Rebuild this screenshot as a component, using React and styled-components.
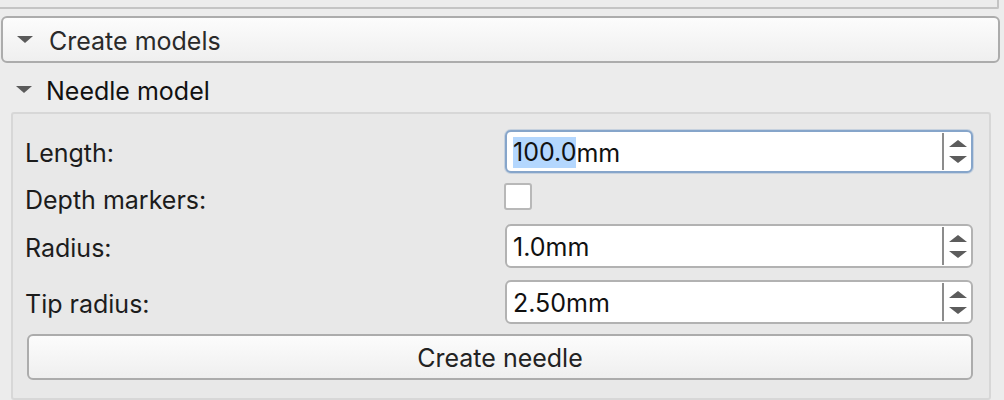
import React from 'react'
import styled, {createGlobalStyle} from 'styled-components'

const GlobalStyle = createGlobalStyle`
  html, body {
    margin: 0;
    padding: 0;
    background: #ececec;
  }
  body {
    font-family: "Inter", "Liberation Sans", sans-serif;
    color: #1c1c1c;
  }
`

const Page = styled.div`
  width: 1004px;
  height: 400px;
  overflow: hidden;
  display: flex;
  flex-direction: column;
`

const TopPanel = styled.div`
  box-sizing: border-box;
  width: 999px;
  height: 9px;
  border-right: 2px solid #c4c4c4;
  border-bottom: 2px solid #c4c4c4;
  border-bottom-right-radius: 2px;
`

const Triangle = styled.span`
  display: inline-block;
  width: 0;
  height: 0;
  border-left: 8px solid transparent;
  border-right: 8px solid transparent;
  border-top: 7px solid #5a5a5a;
`

const Caption = styled.span`
  padding-top: 3px;
`

const CollapseButton = styled.div`
  box-sizing: border-box;
  margin: 7px 0 0 1px;
  width: 999px;
  height: 47px;
  border: 2px solid #acacac;
  border-radius: 6px;
  background: linear-gradient(#fcfcfc, #efefef);
  display: flex;
  align-items: center;
  padding-left: 14px;
  gap: 16px;
  font-size: 25px;
  color: #2a2a2a;
`

const SectionHeader = styled.div`
  height: 44px;
  margin-top: 5px;
  display: flex;
  align-items: center;
  padding-left: 16px;
  gap: 14px;
  font-size: 25px;
  color: #111;
`

const GroupBox = styled.div`
  box-sizing: border-box;
  margin: 1px 0 0 11px;
  width: 980px;
  height: 290px;
  border: 2px solid #d7d7d7;
  border-radius: 3px;
  background: #e8e8e8;
  padding: 16px 16px 0 12px;
  display: flex;
  flex-direction: column;
`

const FormRow = styled.div`
  display: flex;
  align-items: ${p => p.$align || 'center'};
  height: ${p => p.$h}px;
  margin-bottom: ${p => p.$gap}px;
`

const Label = styled.div`
  flex: 1;
  font-size: 25px;
  color: #1c1c1c;
  align-self: center;
  padding-top: ${p => p.$offset || 0}px;
`

const SpinBox = styled.div`
  box-sizing: border-box;
  width: 468px;
  height: 100%;
  background: #fff;
  border: 2px solid ${p => (p.$focused ? '#86a5ca' : '#b2b2b2')};
  border-radius: 6px;
  display: flex;
  align-items: stretch;
  box-shadow: ${p => (p.$focused ? '0 0 0 1px rgba(134,165,202,0.35)' : 'none')};
`

const SpinText = styled.div`
  flex: 1;
  display: flex;
  align-items: center;
  padding: 2px 0 0 6px;
  font-size: 25px;
  color: #111;
`

const Selected = styled.span`
  background: #b4d7fe;
  line-height: 31px;
`

const SpinButtons = styled.div`
  width: 27px;
  border-left: 2px solid #8c8c8c;
  margin: 1px 0;
  display: flex;
  flex-direction: column;
  align-items: center;
  justify-content: center;
  gap: 9px;
`

const Arrow = styled.span`
  display: block;
  width: 0;
  height: 0;
  border-left: 9px solid transparent;
  border-right: 9px solid transparent;
  ${p => (p.$up ? 'border-bottom: 7px solid #5c5c5c;' : 'border-top: 7px solid #5c5c5c;')}
`

const CheckBox = styled.div`
  box-sizing: border-box;
  width: 28px;
  height: 27px;
  margin-right: 441px;
  background: #fff;
  border: 2px solid #b8b8b8;
  border-radius: 3px;
`

const PushButton = styled.div`
  box-sizing: border-box;
  width: 946px;
  height: 46px;
  margin-left: 2px;
  padding-top: 2px;
  border: 2px solid #acacac;
  border-radius: 6px;
  background: linear-gradient(#fcfcfc, #efefef);
  display: flex;
  align-items: center;
  justify-content: center;
  font-size: 25px;
  color: #222;
`

const Spin = ({value, selected, focused}) => (
  <SpinBox $focused={focused}>
    <SpinText>
      {selected ? <Selected>{selected}</Selected> : null}
      {value}
    </SpinText>
    <SpinButtons>
      <Arrow $up />
      <Arrow />
    </SpinButtons>
  </SpinBox>
)

export default function App() {
  return (
    <Page>
      <GlobalStyle />
      <TopPanel />
      <CollapseButton>
        <Triangle />
        <Caption>Create models</Caption>
      </CollapseButton>
      <SectionHeader>
        <Triangle />
        <Caption>Needle model</Caption>
      </SectionHeader>
      <GroupBox>
        <FormRow $h={43} $gap={10}>
          <Label $offset={3}>Length:</Label>
          <Spin focused selected="100.0" value="mm" />
        </FormRow>
        <FormRow $h={31} $gap={10} $align="flex-start">
          <Label $offset={2}>Depth markers:</Label>
          <CheckBox />
        </FormRow>
        <FormRow $h={44} $gap={12}>
          <Label $offset={3}>Radius:</Label>
          <Spin value="1.0mm" />
        </FormRow>
        <FormRow $h={44} $gap={10}>
          <Label $offset={3}>Tip radius:</Label>
          <Spin value="2.50mm" />
        </FormRow>
        <PushButton>Create needle</PushButton>
      </GroupBox>
    </Page>
  )
}
